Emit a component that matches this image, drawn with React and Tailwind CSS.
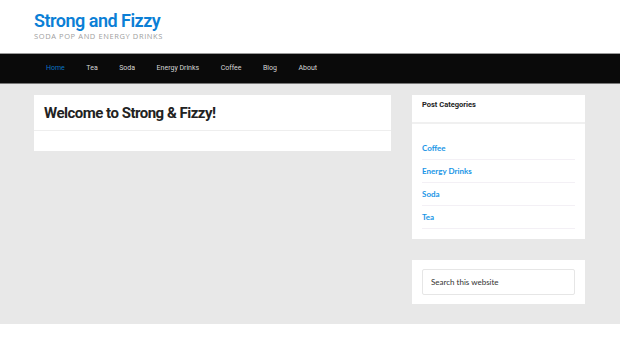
import React from "react";

const navItems = ["Home", "Tea", "Soda", "Energy Drinks", "Coffee", "Blog", "About"];
const categories = ["Coffee", "Energy Drinks", "Soda", "Tea"];

const App = () => {
  return (
    <div className="w-[620px] h-[343px] overflow-hidden bg-white font-['Roboto',sans-serif]">
      {/* header */}
      <header className="h-[53px] px-[34px] pt-[11px]">
        <h1 className="text-[18px] leading-[20px] font-semibold text-[#0b7fd6] tracking-[-0.5px]">
          Strong and Fizzy
        </h1>
        <p className="text-[7.5px] leading-[10px] tracking-[0.6px] text-[#a0a0a0] font-['Open_Sans',sans-serif]">
          SODA POP AND ENERGY DRINKS
        </p>
      </header>

      {/* nav */}
      <nav className="h-[31px] bg-[#0a0a0a] border-t border-[#9a9a9a] border-b border-b-[#777] flex items-center pl-[46px]">
        <ul className="flex items-center gap-[21.5px] text-[7px] text-[#d6d6d6]">
          {navItems.map((item, i) => (
            <li key={item} className={i === 0 ? "text-[#0b73c4]" : ""}>
              {item}
            </li>
          ))}
        </ul>
      </nav>

      {/* content */}
      <div className="h-[240px] bg-[#e8e8e8] flex gap-[21px] px-[34px] pt-[11px]">
        <main className="w-[357px]">
          <article className="bg-white h-[56px]">
            <h2 className="h-[36px] px-[10px] pt-[8px] text-[15px] leading-[20px] font-bold text-[#222] tracking-[-0.5px] border-b border-[#eeeeee]">
              Welcome to Strong &amp; Fizzy!
            </h2>
          </article>
        </main>

        <aside className="w-[173px] flex flex-col gap-[21px]">
          <section className="bg-white h-[144px]">
            <h3 className="h-[29px] px-[10px] pt-[4px] text-[7.5px] font-bold text-[#222] border-b-2 border-[#f0f0f0]">
              Post Categories
            </h3>
            <ul className="px-[10px] pt-[13px] pr-[10px] font-['Lato',sans-serif]">
              {categories.map((c) => (
                <li
                  key={c}
                  className="h-[23px] pt-[5px] text-[8px] font-bold text-[#1a96e6] border-b border-[#f3f0f5]"
                >
                  {c}
                </li>
              ))}
            </ul>
          </section>

          <section className="bg-white h-[44px] px-[10px] pt-[9px]">
            <div className="h-[26px] border border-[#e6e6e6] rounded-[2px] flex items-center px-[8px] text-[8px] text-[#333] font-['Lato',sans-serif]">
              Search this website
            </div>
          </section>
        </aside>
      </div>
    </div>
  );
};

export default App;
